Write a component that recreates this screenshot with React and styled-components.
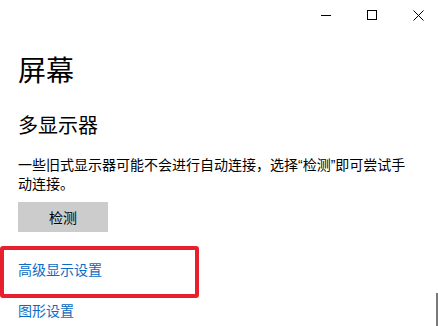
import React from 'react';
import styled, { createGlobalStyle } from 'styled-components';

const GlobalStyle = createGlobalStyle`
  html, body {
    margin: 0;
    padding: 0;
    background: #fff;
  }
  body {
    font-family: 'Liberation Sans', 'Noto Sans CJK SC', sans-serif;
    color: #000;
    overflow: hidden;
  }
`;

const App = () => {
  return (
    <Window>
      <GlobalStyle />
      <CaptionBar>
        <CaptionButton aria-label="最小化">
          <svg width="10" height="10" viewBox="0 0 10 10">
            <line x1="0" y1="5.5" x2="10" y2="5.5" stroke="#000" strokeWidth="1" />
          </svg>
        </CaptionButton>
        <CaptionButton aria-label="最大化">
          <svg width="10" height="10" viewBox="0 0 10 10">
            <rect x="0.5" y="0.5" width="9" height="9" fill="none" stroke="#000" strokeWidth="1" />
          </svg>
        </CaptionButton>
        <CaptionButton aria-label="关闭">
          <svg width="11" height="11" viewBox="0 0 11 11">
            <path d="M0.5 0.5 L10.5 10.5 M10.5 0.5 L0.5 10.5" stroke="#000" strokeWidth="1" />
          </svg>
        </CaptionButton>
      </CaptionBar>

      <Content>
        <PageTitle>屏幕</PageTitle>
        <SectionTitle>多显示器</SectionTitle>
        <Description>
          一些旧式显示器可能不会进行自动连接，选择“检测”即可尝试手动连接。
        </Description>
        <DetectButton>检测</DetectButton>

        <Highlight>
          <Link href="#">高级显示设置</Link>
        </Highlight>
        <Link href="#" $below>图形设置</Link>
      </Content>

      <ScrollThumb />
    </Window>
  );
};

const Window = styled.div`
  position: relative;
  width: 438px;
  height: 326px;
  background: #fff;
  overflow: hidden;
`;

const CaptionBar = styled.div`
  display: flex;
  justify-content: flex-end;
  height: 30px;
  margin-right: -3px;
`;

const CaptionButton = styled.div`
  width: 46px;
  height: 30px;
  display: flex;
  align-items: center;
  justify-content: center;
`;

const Content = styled.div`
  display: flex;
  flex-direction: column;
  align-items: flex-start;
  padding-left: 18px;
`;

const PageTitle = styled.h1`
  margin: 22px 0 0;
  font-size: 28px;
  line-height: 40px;
  font-weight: 400;
`;

const SectionTitle = styled.h2`
  margin: 20px 0 0;
  font-size: 20px;
  line-height: 28px;
  font-weight: 400;
`;

const Description = styled.p`
  margin: 16px 0 0;
  width: 400px;
  font-size: 14px;
  line-height: 19px;
`;

const DetectButton = styled.button`
  margin-top: 8px;
  width: 90px;
  height: 30px;
  border: none;
  background: #cccccc;
  color: #000;
  font-family: 'Liberation Sans', 'Noto Sans CJK SC', sans-serif;
  font-size: 14px;
  padding: 0;
`;

const Highlight = styled.div`
  margin: 14px 0 0 -18px;
  width: 199px;
  height: 52px;
  box-sizing: border-box;
  border: 4px solid #e8202d;
  border-radius: 3px;
  padding: 10px 0 0 14px;
`;

const Link = styled.a`
  display: block;
  font-size: 14px;
  line-height: 20px;
  color: #0a6cc4;
  text-decoration: none;
  margin-top: ${(p) => (p.$below ? '3px' : '0')};
`;

const ScrollThumb = styled.div`
  position: absolute;
  right: 0;
  top: 293px;
  width: 2px;
  height: 40px;
  background: #7a7a7a;
`;

export default App;
